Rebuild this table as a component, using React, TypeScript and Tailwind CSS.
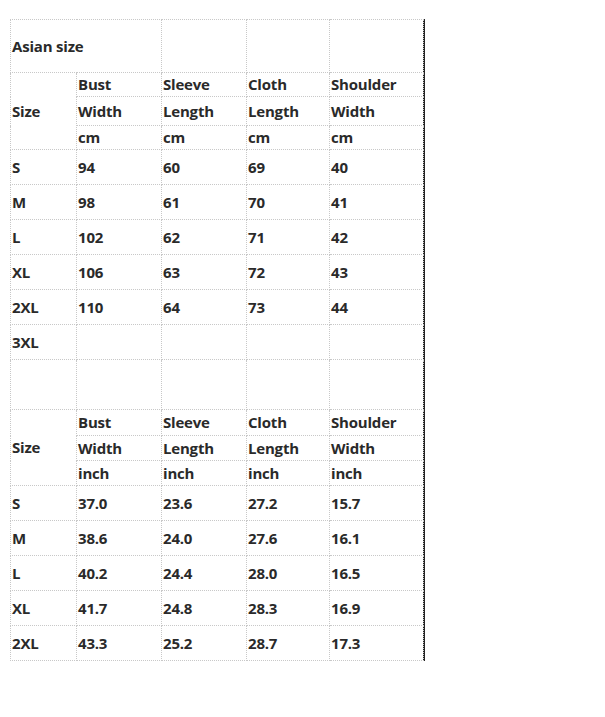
const cm = [
  ["S", "94", "60", "69", "40"],
  ["M", "98", "61", "70", "41"],
  ["L", "102", "62", "71", "42"],
  ["XL", "106", "63", "72", "43"],
  ["2XL", "110", "64", "73", "44"],
  ["3XL", "", "", "", ""],
];

const inch = [
  ["S", "37.0", "23.6", "27.2", "15.7"],
  ["M", "38.6", "24.0", "27.6", "16.1"],
  ["L", "40.2", "24.4", "28.0", "16.5"],
  ["XL", "41.7", "24.8", "28.3", "16.9"],
  ["2XL", "43.3", "25.2", "28.7", "17.3"],
];

const cell = "border border-dotted border-[#c8c8c8] px-[1px] align-middle text-left";

function HeaderRows({ unit, heights }: { unit: string; heights: string[] }) {
  return (
    <>
      <tr className={heights[0]}>
        <td className={cell} rowSpan={3}>Size</td>
        <td className={cell}>Bust</td>
        <td className={cell}>Sleeve</td>
        <td className={cell}>Cloth</td>
        <td className={cell}>Shoulder</td>
      </tr>
      <tr className={heights[1]}>
        <td className={cell}>Width</td>
        <td className={cell}>Length</td>
        <td className={cell}>Length</td>
        <td className={cell}>Width</td>
      </tr>
      <tr className={heights[2]}>
        <td className={cell}>{unit}</td>
        <td className={cell}>{unit}</td>
        <td className={cell}>{unit}</td>
        <td className={cell}>{unit}</td>
      </tr>
    </>
  );
}

export default function App() {
  return (
    <div className="w-[605px] h-[717px] bg-white pt-[19px] pl-[10px]">
      <div className="w-[415px] border-r-2 border-[#222]">
        <table
          className="w-[413px] border-collapse table-fixed text-[15px] font-bold text-[#2a2a2a] leading-none tracking-[-0.2px]"
          style={{ fontFamily: '"Open Sans", "Noto Sans", sans-serif' }}
        >
          <colgroup>
            <col className="w-[66px]" />
            <col className="w-[85px]" />
            <col className="w-[85px]" />
            <col className="w-[83px]" />
            <col className="w-[94px]" />
          </colgroup>
          <tbody>
            <tr className="h-[53px]">
              <td className={cell} colSpan={2}>Asian size</td>
              <td className={cell}></td>
              <td className={cell}></td>
              <td className={cell}></td>
            </tr>
            <HeaderRows unit="cm" heights={["h-[24px]", "h-[29px]", "h-[24px]"]} />
            {cm.map((r) => (
              <tr key={r[0]} className="h-[35px]">
                {r.map((v, i) => (
                  <td key={i} className={cell}>{v}</td>
                ))}
              </tr>
            ))}
            <tr className="h-[50px]">
              <td className={cell}></td>
              <td className={cell}></td>
              <td className={cell}></td>
              <td className={cell}></td>
              <td className={cell}></td>
            </tr>
            <HeaderRows unit="inch" heights={["h-[26px]", "h-[25px]", "h-[25px]"]} />
            {inch.map((r) => (
              <tr key={r[0]} className="h-[35px]">
                {r.map((v, i) => (
                  <td key={i} className={cell}>{v}</td>
                ))}
              </tr>
            ))}
          </tbody>
        </table>
      </div>
    </div>
  );
}
